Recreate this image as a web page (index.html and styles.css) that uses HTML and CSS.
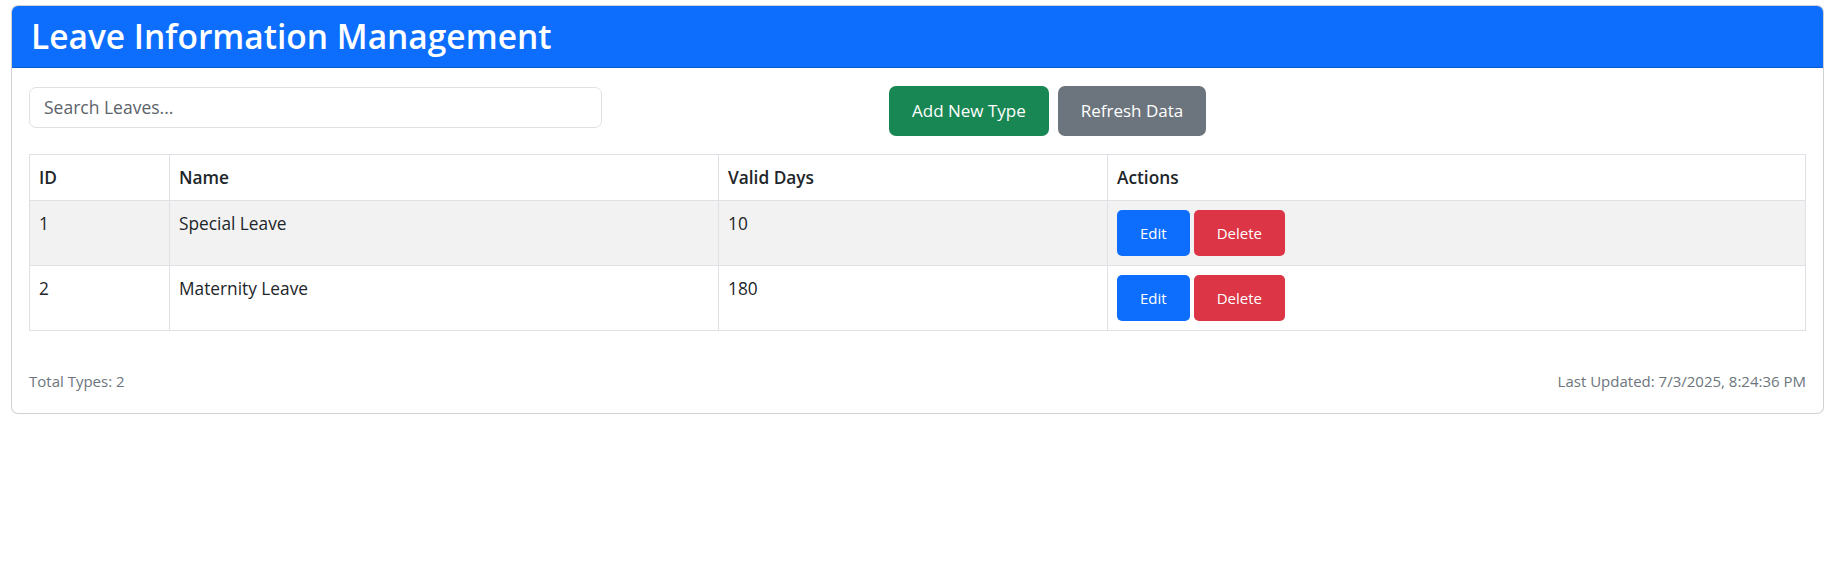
FILE: index.html
```html
<!DOCTYPE html>
<html lang="en">
<head>
<meta charset="utf-8">
<title>Leave Information Management</title>
<link rel="stylesheet" href="styles.css">
</head>
<body>
<div class="page">
  <div class="card">
    <div class="card-header">
      <h2 class="title">Leave Information Management</h2>
    </div>
    <div class="card-body">
      <div class="toolbar">
        <input class="search" type="text" placeholder="Search Leaves...">
        <div class="toolbar-actions">
          <button class="btn btn-lg btn-green">Add New Type</button>
          <button class="btn btn-lg btn-gray">Refresh Data</button>
        </div>
      </div>
      <table class="table">
        <colgroup>
          <col class="col-id">
          <col class="col-name">
          <col class="col-days">
          <col class="col-actions">
        </colgroup>
        <thead>
          <tr><th>ID</th><th>Name</th><th>Valid Days</th><th>Actions</th></tr>
        </thead>
        <tbody>
          <tr class="striped">
            <td>1</td><td>Special Leave</td><td>10</td>
            <td><button class="btn btn-sm btn-blue">Edit</button><button class="btn btn-sm btn-red">Delete</button></td>
          </tr>
          <tr>
            <td>2</td><td>Maternity Leave</td><td>180</td>
            <td><button class="btn btn-sm btn-blue">Edit</button><button class="btn btn-sm btn-red">Delete</button></td>
          </tr>
        </tbody>
      </table>
      <div class="footer">
        <span>Total Types: 2</span>
        <span>Last Updated: 7/3/2025, 8:24:36 PM</span>
      </div>
    </div>
  </div>
</div>
</body>
</html>
```

FILE: styles.css
```css
* { box-sizing: border-box; }
html, body { margin: 0; padding: 0; background: #fff; }
body {
  font-family: "Open Sans", "Noto Sans", "Liberation Sans", sans-serif;
  color: #212529;
}
.page { padding: 5px 13px 0 11px; }
.card {
  border: 1px solid rgba(0,0,0,0.175);
  border-radius: 7px;
  background: #fff;
}
.card-header {
  background: #0d6efd;
  border-bottom: 1px solid rgba(0,0,0,0.175);
  border-radius: 6px 6px 0 0;
  padding: 10px 19px 10px;
}
.title {
  margin: 0;
  color: #fff;
  font-size: 33.5px;
  line-height: 40.8px;
  font-weight: 600;
}
.card-body { padding: 18px 17px 20px; }
.toolbar {
  display: flex;
  align-items: flex-start;
  margin-bottom: 18px;
}
.search {
  width: 573px;
  height: 41px;
  margin-top: 1px;
  border: 1px solid #dee2e6;
  border-radius: 7px;
  padding: 0 14px;
  font-family: inherit;
  font-size: 17.5px;
  color: #212529;
  outline: none;
}
.search::placeholder { color: #5c636a; }
.toolbar-actions {
  display: flex;
  gap: 9px;
  margin-left: 287px;
}
.btn {
  border: 1px solid transparent;
  color: #fff;
  font-family: inherit;
  cursor: pointer;
}
.btn-lg {
  height: 50px;
  padding: 0 22px;
  font-size: 17px;
  line-height: 28px;
  border-radius: 7px;
}
.btn-sm {
  height: 46px;
  padding: 0 22px;
  font-size: 15px;
  line-height: 24px;
  border-radius: 5px;
  margin-right: 4px;
}
.btn-green { background: #198754; }
.btn-gray { background: #6c757d; }
.btn-blue { background: #0d6efd; }
.btn-red { background: #dc3545; }
.table {
  width: 100%;
  border-collapse: collapse;
  table-layout: fixed;
  border: 1px solid #dee2e6;
  font-size: 17.3px;
  line-height: 28px;
}
.col-id { width: 140px; }
.col-name { width: 549px; }
.col-days { width: 389px; }
.table th, .table td {
  border: 1px solid #dee2e6;
  padding: 9px 9px 8px;
  text-align: left;
  vertical-align: top;
}
.table td { padding: 9px 9px 9px; }
.table th { font-weight: 600; }
.striped td { background: #f2f2f2; }
.footer {
  display: flex;
  justify-content: space-between;
  margin-top: 38px;
  font-size: 15px;
  line-height: 24px;
  color: #6c757d;
}
```
